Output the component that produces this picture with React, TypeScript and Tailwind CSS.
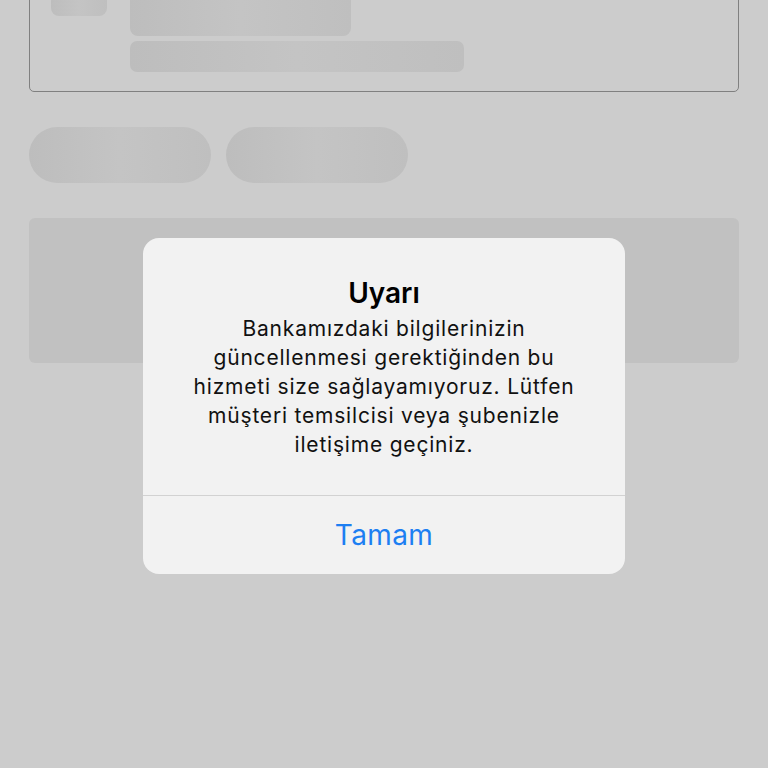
import React from "react";

const Skel: React.FC<{ className: string }> = ({ className }) => (
  <div className={`bg-gradient-to-r from-[#bdbdbd] via-[#c4c4c4] to-[#bfbfbf] ${className}`} />
);

export default function App() {
  return (
    <div className="relative w-[768px] h-[768px] overflow-hidden bg-[#cccccc] font-['Inter',sans-serif]">
      {/* background page */}
      <div className="px-[29px] flex flex-col">
        <div className="-mt-[20px] h-[112px] border border-[#808080] rounded-[5px] flex gap-[23px] pl-[21px]">
          <Skel className="w-[56px] h-[35px] rounded-[8px]" />
          <div className="flex flex-col gap-[5px]">
            <Skel className="w-[221px] h-[55px] rounded-[8px]" />
            <Skel className="w-[334px] h-[31px] rounded-[7px]" />
          </div>
        </div>
        <div className="flex gap-[15px] mt-[35px]">
          <Skel className="w-[182px] h-[56px] rounded-full" />
          <Skel className="w-[182px] h-[56px] rounded-full" />
        </div>
        <div className="mt-[35px] h-[145px] rounded-[6px] bg-[#c1c1c1]" />
      </div>

      {/* alert */}
      <div className="absolute top-[238px] left-[143px] w-[482px] rounded-[16px] bg-[#f2f2f2] text-center">
        <div className="pt-[38px] pb-[36px] px-[20px]">
          <div className="text-[28px] leading-[34px] font-semibold text-black">Uyarı</div>
          <div className="mt-[4px] text-[21px] leading-[29px] tracking-[0.8px] text-[#111]">
            Bankamızdaki bilgilerinizin
            <br />
            güncellenmesi gerektiğinden bu
            <br />
            hizmeti size sağlayamıyoruz. Lütfen
            <br />
            müşteri temsilcisi veya şubenizle
            <br />
            iletişime geçiniz.
          </div>
        </div>
        <div className="border-t border-[#d2d2d2] h-[79px] flex items-center justify-center">
          <span className="text-[28px] tracking-[0.4px] text-[#1d7ff2]">Tamam</span>
        </div>
      </div>
    </div>
  );
}
